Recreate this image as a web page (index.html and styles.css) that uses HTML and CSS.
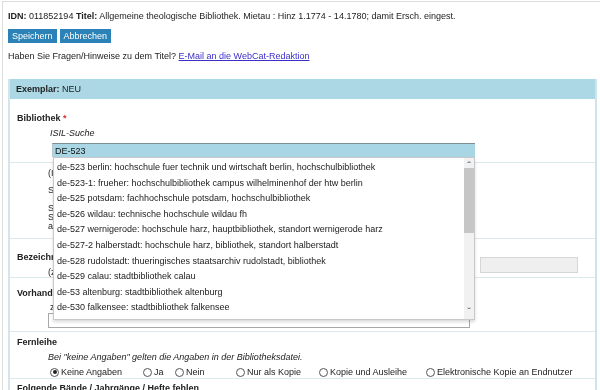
FILE: index.html
```html
<!DOCTYPE html>
<html lang="de">

<head>
    <meta charset="UTF-8">
    <title>WebCat - Exemplar anlegen</title>
    <link rel="stylesheet" href="styles.css">
</head>

<body>
    <div class="page">
        <p class="title"><b>IDN:</b> 011852194 <b>Titel:</b> Allgemeine theologische Bibliothek. Mietau : Hinz 1.1774 - 14.1780; damit Ersch. eingest.</p>
        <div class="actions">
            <button class="btn">Speichern</button>
            <button class="btn">Abbrechen</button>
        </div>
        <p class="hint">Haben Sie Fragen/Hinweise zu dem Titel? <a href="#">E-Mail an die WebCat-Redaktion</a></p>

        <div class="exemplar">
            <div class="exemplar-head"><b>Exemplar:</b> NEU</div>

            <div class="row row-bib">
                <div class="label">Bibliothek <span class="req">*</span></div>
                <div class="sub"><i>ISIL-Suche</i></div>
                <div class="isil">
                    <input class="isil-input" type="text" value="DE-523">
                    <!-- Autocomplete-Liste -->
                    <ul class="suggest">
                        <li>de-523 berlin: hochschule fuer technik und wirtschaft berlin, hochschulbibliothek</li>
                        <li>de-523-1: frueher: hochschulbibliothek campus wilhelminenhof der htw berlin</li>
                        <li>de-525 potsdam: fachhochschule potsdam, hochschulbibliothek</li>
                        <li>de-526 wildau: technische hochschule wildau fh</li>
                        <li>de-527 wernigerode: hochschule harz, hauptbibliothek, standort wernigerode harz</li>
                        <li>de-527-2 halberstadt: hochschule harz, bibliothek, standort halberstadt</li>
                        <li>de-528 rudolstadt: thueringisches staatsarchiv rudolstadt, bibliothek</li>
                        <li>de-529 calau: stadtbibliothek calau</li>
                        <li>de-53 altenburg: stadtbibliothek altenburg</li>
                        <li>de-530 falkensee: stadtbibliothek falkensee</li>
                        <li>de-531 fuerstenwalde: stadtbibliothek fuerstenwalde</li>
                        <li>de-532 luckenwalde: stadtbibliothek luckenwalde</li>
                    </ul>
                    <div class="scroll">
                        <span class="arrow">&#710;</span>
                        <span class="thumb"></span>
                        <span class="arrow down">&#711;</span>
                    </div>
                </div>
            </div>

            <div class="row row-info">
                <div class="info">
                    <p class="info-first">(ISIL oder Name der Bibliothek eingeben)</p>
                    <p class="info-second">Sigel: -</p>
                    <p>Sitz: -</p>
                    <p>Standort: -</p>
                    <p>adresse: -</p>
                </div>
            </div>

            <div class="row row-bez">
                <div class="cell">
                    <div class="label">Bezeichnung</div>
                    <div class="sub">(z.B. Signatur)</div>
                </div>
                <div class="side">
                    <input class="disabled" type="text" disabled>
                </div>
            </div>

            <div class="row row-vorh">
                <div class="label">Vorhanden</div>
                <div class="sub">z.B. 1.1774 - 14.1780</div>
                <textarea class="notes"></textarea>
            </div>

            <div class="row row-fern">
                <div class="label">Fernleihe</div>
                <div class="sub"><i>Bei "keine Angaben" gelten die Angaben in der Bibliotheksdatei.</i></div>
                <div class="radios">
                    <label><span class="radio checked"></span>Keine Angaben</label>
                    <label><span class="radio"></span>Ja</label>
                    <label><span class="radio"></span>Nein</label>
                    <label><span class="radio"></span>Nur als Kopie</label>
                    <label><span class="radio"></span>Kopie und Ausleihe</label>
                    <label><span class="radio"></span>Elektronische Kopie an Endnutzer</label>
                </div>
            </div>

            <div class="row row-last">
                <div class="label">Folgende Bände / Jahrgänge / Hefte fehlen</div>
            </div>
        </div>
    </div>
</body>

</html>
```

FILE: styles.css
```css
body {
    font-family: 'Liberation Sans', Arial, sans-serif;
    font-size: 9px;
    color: #222;
    background-color: #fff;
    margin: 0;
    padding: 0;
    overflow: hidden;
}

.page {
    margin: 1px 0 0 2px;
    border-top: 1px solid #dcdcdc;
    border-left: 1px solid #dcdcdc;
    padding: 8px 3px 0 5px;
    height: 400px;
}

p {
    margin: 0;
}

.title {
    line-height: 12px;
}

.actions {
    display: flex;
    gap: 3px;
    margin-top: 7px;
}

.btn {
    font-family: inherit;
    font-size: 9px;
    background-color: #2b82b6;
    color: #fff;
    border: none;
    padding: 0 4px;
    height: 14px;
    line-height: 14px;
    cursor: pointer;
}

.hint {
    margin-top: 7px;
    line-height: 12px;
}

.hint a {
    color: #3b2fc9;
}

.exemplar {
    margin-top: 17px;
    border-left: 2px solid #d4e6ed;
    border-right: 2px solid #cfe3ea;
}

.exemplar-head {
    background-color: #acd8e5;
    height: 20px;
    line-height: 20px;
    padding-left: 6px;
}

.row {
    border-bottom: 1px solid #dbe9ee;
    padding-left: 7px;
}

.label {
    font-weight: bold;
    line-height: 12px;
}

.req {
    color: #d03030;
}

.sub {
    padding-left: 33px;
    line-height: 12px;
}

.row-bib {
    height: 64px;
    padding-top: 13px;
    box-sizing: border-box;
}

.row-bib .sub {
    margin-top: 3px;
}

.isil {
    position: relative;
    margin: 4px 0 0 35px;
    width: 423px;
}

.isil-input {
    display: block;
    box-sizing: border-box;
    width: 100%;
    height: 14px;
    margin: 0;
    padding: 0 2px;
    font-family: inherit;
    font-size: 9px;
    color: #111;
    background-color: #a9d6e5;
    border: none;
    border-top: 1px solid #7b8e95;
    border-left: 1px solid #b7c7cc;
    outline: none;
}

.suggest {
    position: absolute;
    top: 14px;
    left: 1px;
    right: 0;
    height: 163px;
    margin: 0;
    padding: 2px 0 0 0;
    list-style: none;
    background-color: #fff;
    border: 1px solid #c9c9c9;
    box-shadow: 0 2px 3px rgba(0, 0, 0, 0.15);
    overflow: hidden;
    box-sizing: border-box;
    z-index: 2;
}

.suggest li {
    height: 15.6px;
    line-height: 15.6px;
    padding-left: 3px;
    white-space: nowrap;
    color: #222;
}

.scroll {
    position: absolute;
    top: 15px;
    right: 1px;
    width: 10px;
    height: 161px;
    background-color: #f1f1f1;
    z-index: 3;
    display: flex;
    flex-direction: column;
    align-items: center;
}

.scroll .arrow {
    height: 10px;
    font-size: 11px;
    line-height: 16px;
    color: #555;
}

.scroll .down {
    margin-top: auto;
    line-height: 6px;
}

.scroll .thumb {
    width: 10px;
    height: 65px;
    background-color: #c6c6c6;
}

.row-info {
    height: 76px;
    padding-left: 38px;
    padding-top: 6px;
    box-sizing: border-box;
}

.info p {
    line-height: 9px;
}

.info .info-first {
    margin-bottom: 8px;
}

.info .info-second {
    margin-bottom: 9px;
}

.row-bez {
    display: flex;
    height: 39px;
    padding-top: 12px;
    box-sizing: border-box;
}

.row-bez .cell {
    flex: 1;
}

.row-bez .sub {
    padding-left: 31px;
    margin-top: 3px;
}

.row-bez .side {
    width: 115px;
    padding-top: 6px;
}

.disabled {
    display: block;
    box-sizing: border-box;
    width: 98px;
    height: 16px;
    margin: 0;
    background-color: #efefef;
    border: 1px solid #d6d6d6;
}

.row-vorh {
    height: 54px;
    padding-top: 9px;
    box-sizing: border-box;
}

.row-vorh .sub {
    margin-top: 2px;
}

.notes {
    display: block;
    box-sizing: border-box;
    width: 422px;
    height: 15px;
    margin: 0 0 0 31px;
    border: 1px solid #a8a8a8;
    resize: none;
}

.row-fern {
    height: 47px;
    padding-top: 4px;
    box-sizing: border-box;
}

.row-fern .sub {
    padding-left: 31px;
    margin-top: 3px;
}

.radios {
    display: grid;
    grid-template-columns: 93px 32px 61px 83px 107px auto;
    margin: 3px 0 0 33px;
    line-height: 12px;
}

.radios label {
    display: flex;
    align-items: center;
    white-space: nowrap;
}

.radio {
    display: inline-block;
    box-sizing: border-box;
    width: 9px;
    height: 9px;
    margin-right: 2px;
    border: 1px solid #555;
    border-radius: 50%;
    position: relative;
}

.radio.checked::after {
    content: '';
    position: absolute;
    top: 1.5px;
    left: 1.5px;
    width: 4px;
    height: 4px;
    border-radius: 50%;
    background-color: #222;
}

.row-last {
    padding-top: 3px;
    border-bottom: none;
}
```
